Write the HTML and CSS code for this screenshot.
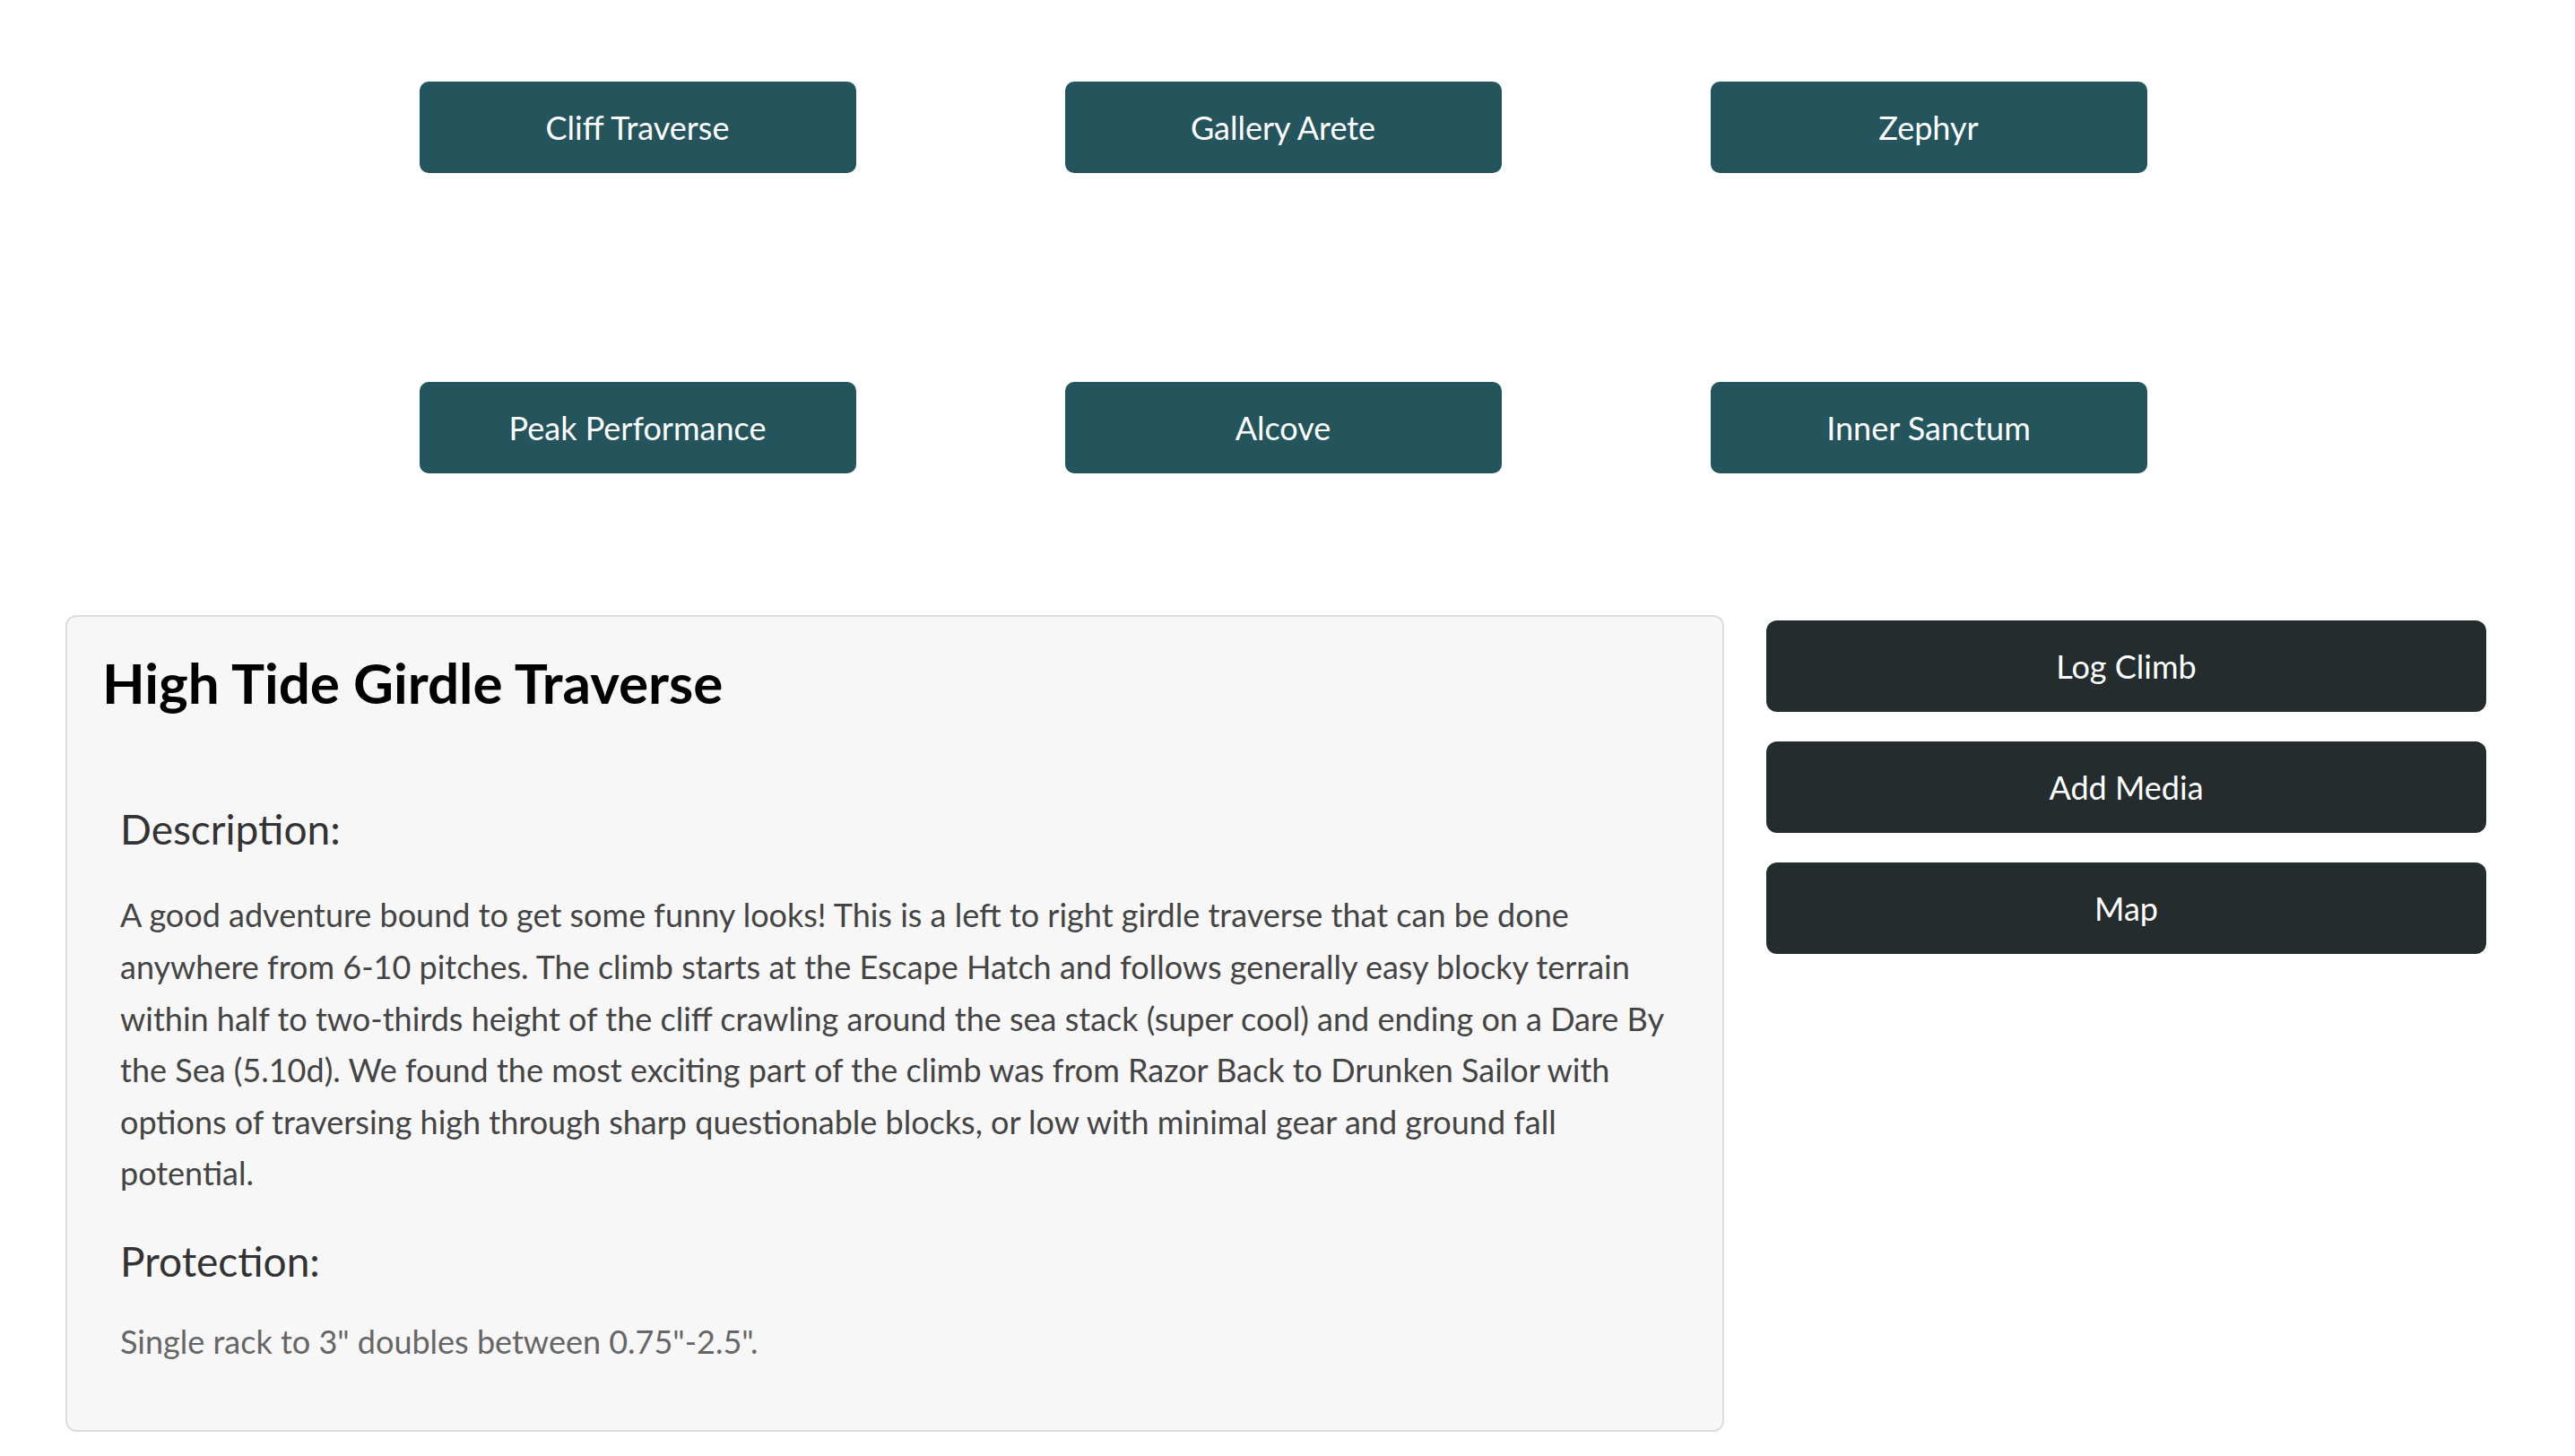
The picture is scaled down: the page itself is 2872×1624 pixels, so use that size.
FILE: index.html
```html
<!DOCTYPE html>
<html lang="en">
<head>
<meta charset="utf-8">
<title>High Tide Girdle Traverse</title>
<link rel="stylesheet" href="styles.css">
</head>
<body>
<nav class="routes">
  <div class="route-cell"><button class="route-btn">Cliff Traverse</button></div>
  <div class="route-cell"><button class="route-btn">Gallery Arete</button></div>
  <div class="route-cell"><button class="route-btn">Zephyr</button></div>
  <div class="route-cell"><button class="route-btn">Peak Performance</button></div>
  <div class="route-cell"><button class="route-btn">Alcove</button></div>
  <div class="route-cell"><button class="route-btn">Inner Sanctum</button></div>
</nav>
<main class="detail">
  <section class="card">
    <h1 class="card-title">High Tide Girdle Traverse</h1>
    <div class="card-body">
      <h2 class="section-title">Description:</h2>
      <p class="desc">A good adventure bound to get some funny looks! This is a left to right girdle traverse that can be done anywhere from 6-10 pitches. The climb starts at the Escape Hatch and follows generally easy blocky terrain within half to two-thirds height of the cliff crawling around the sea stack (super cool) and ending on a Dare By the Sea (5.10d). We found the most exciting part of the climb was from Razor Back to Drunken Sailor with options of traversing high through sharp questionable blocks, or low with minimal gear and ground fall potential.</p>
      <h2 class="section-title">Protection:</h2>
      <p class="prot">Single rack to 3" doubles between 0.75"-2.5".</p>
    </div>
  </section>
  <aside class="actions">
    <button class="action-btn">Log Climb</button>
    <button class="action-btn">Add Media</button>
    <button class="action-btn">Map</button>
  </aside>
</main>
</body>
</html>
```
FILE: styles.css
```css
* { box-sizing: border-box; }
html, body { margin: 0; padding: 0; background: #ffffff; }
body {
  font-family: "Lato", "Noto Sans", sans-serif;
  color: #222;
}
button { font-family: inherit; cursor: pointer; }

.routes {
  display: grid;
  grid-template-columns: repeat(3, 720px);
  grid-auto-rows: 102px;
  row-gap: 233px;
  padding: 91px 0 0 351px;
}
.route-cell { display: flex; justify-content: center; }
.route-btn {
  width: 487px;
  height: 102px;
  background: #25555c;
  color: #ffffff;
  border: none;
  border-radius: 10px;
  font-size: 36px;
}

.detail {
  display: flex;
  align-items: flex-start;
  gap: 47px;
  padding: 158px 99px 0 73px;
}
.card {
  width: 1850px;
  height: 911px;
  flex: none;
  background: #f7f7f7;
  border: 2px solid #dddddd;
  border-radius: 12px;
  padding: 27px 60px 0 39px;
}
.card-title {
  margin: 0;
  font-size: 62px;
  font-weight: 700;
  color: #000;
  line-height: 1.5;
}
.card-body { padding: 85px 0 0 20px; }
.section-title {
  margin: 0;
  font-size: 46px;
  font-weight: 400;
  color: #333;
  line-height: 1.4;
}
.desc {
  margin: 35px 0 37px;
  font-size: 36px;
  line-height: 1.6;
  color: #444;
}
.prot {
  margin: 29px 0 0;
  font-size: 36px;
  line-height: 1.6;
  color: #666;
}

.actions {
  flex: 1;
  display: flex;
  flex-direction: column;
  gap: 33px;
  padding-top: 6px;
}
.action-btn {
  height: 102px;
  background: #242c2e;
  color: #ffffff;
  border: none;
  border-radius: 12px;
  font-size: 36px;
}
```
